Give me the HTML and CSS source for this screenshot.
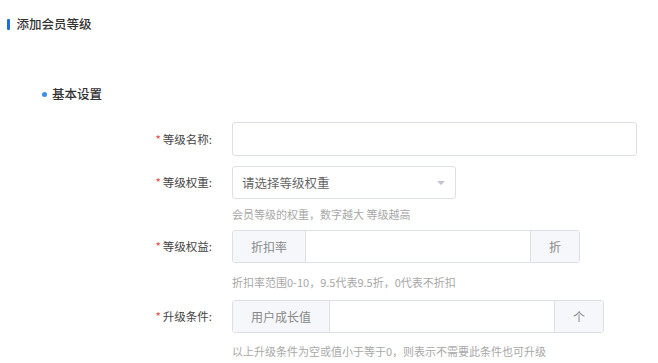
FILE: index.html
```html
<!DOCTYPE html>
<html lang="zh">
<head>
<meta charset="utf-8">
<title>添加会员等级</title>
<link rel="stylesheet" href="styles.css">
</head>
<body>
<div class="page">
  <div class="page-title"><span class="bar"></span>添加会员等级</div>
  <div class="section-title"><span class="dot"></span>基本设置</div>
  <div class="form">
    <div class="form-item item-name">
      <label class="label"><span class="req">*</span>等级名称:</label>
      <div class="control">
        <div class="input input-wide"></div>
      </div>
    </div>
    <div class="form-item item-weight">
      <label class="label"><span class="req">*</span>等级权重:</label>
      <div class="control">
        <div class="input select">
          <span class="placeholder">请选择等级权重</span>
          <span class="caret"></span>
        </div>
        <div class="hint hint-1">会员等级的权重，数字越大 等级越高</div>
      </div>
    </div>
    <div class="form-item item-rate">
      <label class="label"><span class="req">*</span>等级权益:</label>
      <div class="control">
        <div class="group">
          <span class="addon addon-pre">折扣率</span>
          <span class="group-input"></span>
          <span class="addon addon-post">折</span>
        </div>
        <div class="hint hint-2">折扣率范围0-10，9.5代表9.5折，0代表不折扣</div>
      </div>
    </div>
    <div class="form-item item-cond">
      <label class="label"><span class="req">*</span>升级条件:</label>
      <div class="control">
        <div class="group">
          <span class="addon addon-pre">用户成长值</span>
          <span class="group-input"></span>
          <span class="addon addon-post">个</span>
        </div>
        <div class="hint hint-3">以上升级条件为空或值小于等于0，则表示不需要此条件也可升级</div>
      </div>
    </div>
  </div>
</div>
</body>
</html>
```

FILE: styles.css
```css
* { box-sizing: border-box; }
html, body { margin: 0; padding: 0; background: #fff; }
body {
  font-family: "Noto Sans CJK SC", "Noto Sans", sans-serif;
  color: #333;
  width: 658px;
  height: 363px;
  overflow: hidden;
}
.page { padding: 16px 0 0 7px; }
.page-title {
  display: flex;
  align-items: center;
  height: 16px;
  font-size: 12.5px;
  font-weight: 500;
  color: #333;
  line-height: 16px;
}
.bar {
  width: 2.5px;
  height: 11px;
  background: #1f6fd6;
  border-radius: 1px;
  margin-right: 7px;
}
.section-title {
  display: flex;
  align-items: center;
  margin: 54px 0 0 35px;
  height: 16px;
  font-size: 12.5px;
  font-weight: 500;
  line-height: 16px;
  color: #333;
}
.dot {
  width: 5px;
  height: 5px;
  border-radius: 50%;
  background: #3a8ee6;
  margin-right: 5px;
}
.form { margin: 20px 0 0 133px; }
.form-item { display: flex; align-items: flex-start; }
.label {
  width: 92px;
  padding-right: 20px;
  text-align: right;
  font-size: 11.5px;
  color: #444;
  white-space: nowrap;
}
.req { color: #e8473f; margin-right: 2px; }
.input {
  border: 1px solid #dcdfe6;
  border-radius: 3px;
  background: #fff;
}
.item-name .label { line-height: 34px; }
.input-wide { width: 405px; height: 34px; }
.item-weight { margin-top: 10px; }
.item-weight .label { line-height: 33px; }
.select {
  width: 224px;
  height: 33px;
  display: flex;
  align-items: center;
  justify-content: space-between;
  padding: 0 10px 0 9px;
}
.placeholder { font-size: 12.5px; color: #666; }
.caret {
  width: 0;
  height: 0;
  border-left: 4px solid transparent;
  border-right: 4px solid transparent;
  border-top: 4px solid #c0c4cc;
}
.hint {
  font-size: 11px;
  color: #a8a8a8;
  line-height: 16px;
}
.hint-1 { margin-top: 7px; }
.item-rate { margin-top: 8px; }
.item-rate .label, .item-cond .label { line-height: 33px; }
.group {
  display: flex;
  height: 33px;
  border: 1px solid #dcdfe6;
  border-radius: 3px;
  overflow: hidden;
}
.addon {
  display: flex;
  align-items: center;
  justify-content: center;
  padding: 0 18px;
  background: #f5f7fa;
  font-size: 12px;
  color: #888;
}
.addon-pre { border-right: 1px solid #dcdfe6; }
.addon-post { border-left: 1px solid #dcdfe6; }
.group-input { width: 224px; background: #fff; }
.hint-2 { margin-top: 11px; }
.item-cond { margin-top: 10px; }
.hint-3 { margin-top: 10px; }
```
